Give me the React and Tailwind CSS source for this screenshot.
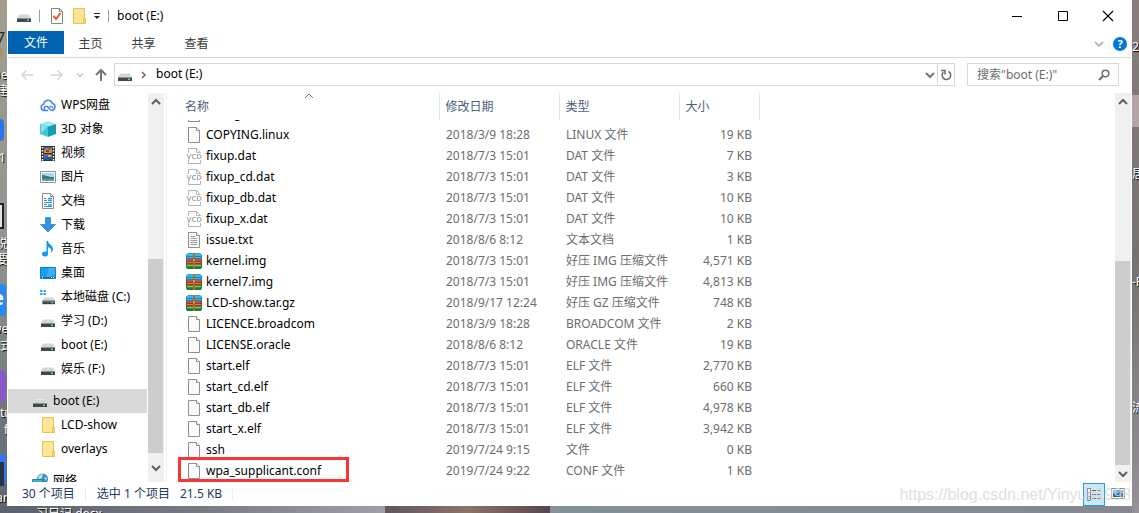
import React from "react";

const Svg = ({ children, className = "", w = 16, h = 16 }) => (
  <svg width={w} height={h} viewBox={`0 0 ${w} ${h}`} className={`shrink-0 ${className}`} aria-hidden="true">
    {children}
  </svg>
);

const DriveShape = () => (
  <>
    <path d="M3.500 5h9l2.500 4h-14z" fill="#d3d6d8" />
    <path d="M3.500 5h9l.6 1h-10.200z" fill="#e6e8e9" />
    <rect x="1" y="9" width="14" height="4" fill="#42474b" />
    <rect x="1" y="9" width="14" height="1" fill="#8b9195" />
    <rect x="11" y="10.500" width="2" height="1.500" fill="#4ee36a" />
  </>
);
const Drive = () => <Svg><g transform="translate(0 1)"><DriveShape /></g></Svg>;
const SystemDrive = () => (
  <Svg>
    <g transform="translate(1.500 3.500) scale(.9)"><DriveShape /></g>
    <path d="M0 1h2.500v2H0zM3.500 1H6v2H3.500zM0 4h2.500v2H0zM3.500 4H6v2H3.500z" fill="#1fb2ee" />
  </Svg>
);
const Folder = () => (
  <Svg>
    <path d="M2.500.500h11v10h1v5h-12z" fill="#ffe596" stroke="#e6c457" />
    <path d="M12.500 10.500v5h2v-5z" fill="#f8d775" stroke="#e6c457" />
  </Svg>
);
const Cloud = () => (
  <Svg>
    <path d="M8 13.500H4a3.200 3.200 0 0 1-.3-6.300A4.400 4.400 0 0 1 12.200 6.200a3.800 3.800 0 0 1 .1 7.300c-1.300 0-2-.6-2.800-1.500L8 10.200a2 2 0 0 0-3.300 2.300" fill="none" stroke="#4b86ea" strokeWidth="1.600" />
    <path d="M9.500 10.500c1-1.600 3.300-1 3.300.7" fill="none" stroke="#4b86ea" strokeWidth="1.400" />
  </Svg>
);
const Cube = () => (
  <Svg>
    <path d="M0 3 8 0l8 3-8 2.500z" fill="#9be8ec" />
    <path d="M0 3l8 2.500V16l-8-3z" fill="#45c8d5" />
    <path d="M16 3 8 5.500V16l8-3z" fill="#159bb2" />
    <path d="M1 4l6 2-6 6z" fill="#87e1e8" />
  </Svg>
);
const Film = () => (
  <Svg>
    <rect x="1" y="1" width="14" height="15" fill="#333" />
    <path d="M2.500 2v14M13.500 2v14" stroke="#fff" strokeDasharray="1.500 1.500" strokeWidth="1.500" />
    <rect x="4" y="2" width="8" height="6" fill="#3b64bd" />
    <rect x="4" y="9" width="8" height="6" fill="#3977c6" />
    <path d="M4 5l3-2 2 2 3-2v5H4z" fill="#dd8a28" /><path d="M4 13l4-2 4 2v2H4z" fill="#38527d" />
    <path d="M6 5h3v2H6z" fill="#a7312b" /><path d="M8 10h3v2H8z" fill="#e0b735" />
  </Svg>
);
const Picture = () => (
  <Svg>
    <path d="M.500 2.500h15v11H.500z" fill="#fff" stroke="#8d9499" />
    <path d="M2 4h12v4H2z" fill="#a8d6f4" /><path d="M2 6c4 0 5 2 12 2v2H2z" fill="#47796b" /><path d="M2 10h12v2H2z" fill="#5a9bd3" />
  </Svg>
);
const Document = () => (
  <Svg>
    <path d="M2.500.500h8l3 3v12h-11z" fill="#fff" stroke="#8b8b8b" /><path d="M10.500.500v3h3" fill="none" stroke="#8b8b8b" />
    <path d="M4 5.500h2M4 7.500h3M4 9.500h8M4 11.500h3M4 13.500h8" stroke="#3b8fcd" />
    <path d="M8 5.500h4M8 7.500h4M8 12h4" stroke="#2b9ce0" strokeWidth="1.500" />
  </Svg>
);
const Download = () => (
  <Svg><path d="M5.500.500h5v7h5L8 15 .500 7.500h5z" fill="#3593e3" stroke="#2479c9" strokeWidth=".7" /></Svg>
);
const Music = () => (
  <Svg>
    <ellipse cx="5" cy="13" rx="3" ry="2.500" fill="#1399f4" />
    <path d="M6.500 13V0H8c.3 3.500 5 4 5 7.700 0 2-1 3.300-2 4.300 1-3.500-.2-5-3-5.700V13z" fill="#1399f4" />
  </Svg>
);
const Desktop = () => (
  <Svg>
    <path d="M.500 2.500h15v11H.500z" fill="#19a0f4" stroke="#167dc3" /><path d="M9 3h6v6L6 13z" fill="#3bb0fa" />
    <path d="M1 12.500h14" stroke="#0b65a2" /><path d="M2 12.500h1m8 0h1m1 0h1" stroke="#fff" />
  </Svg>
);
const Network = () => (
  <Svg>
    <circle cx="10.500" cy="6" r="5.500" fill="#3c8fc0" />
    <path d="M6 4c2-3 5-3 5-3l-1 4-3 2zM12 4l3 1-1 3z" fill="#b9e2ee" />
    <path d="M.500 6.500h10v6H.500z" fill="#35b0df" stroke="#3e7894" /><path d="M3 14.500h6" stroke="#6c7a82" />
  </Svg>
);
const Blank = () => (
  <Svg>
    <path d="M2.500.500h8l3 3v12h-11z" fill="#fbfbfb" stroke="#8f8f8f" /><path d="M10.500.500v3h3" fill="#fff" stroke="#8f8f8f" />
  </Svg>
);
const TextFile = () => (
  <Svg>
    <path d="M2.500.500h8l3 3v12h-11z" fill="#fbfbfb" stroke="#8f8f8f" /><path d="M10.500.500v3h3" fill="#fff" stroke="#8f8f8f" />
    <path d="M4.500 4.500h5M4.500 6.500h7M4.500 8.500h7M4.500 10.500h7M4.500 12.500h7" stroke="#9c9c9c" />
  </Svg>
);
const Vcd = () => (
  <Svg>
    <path d="M2.500 5V.500h8l4 4V5M10.500.500v4h4M2.500 12v3.500h12V12" fill="none" stroke="#b4b4b4" />
    <path d="M1 6l2 5 2-5M10 6.500H7.500L6.500 7.500v2l1 1H10M11.500 6.500h2l1.500 1v2l-1.500 1h-2z" fill="none" stroke="#b0b0b0" strokeWidth="1.200" />
  </Svg>
);
const Archive = () => (
  <Svg>
    <path d="M2 0h12l2 2v4H0V2z" fill="#1487c4" /><path d="M2 .500h12l1.500 2.500H.500z" fill="#3cb9ec" /><path d="M1 4.500h14" stroke="#45b4e2" />
    <path d="M0 6h16v5H0z" fill="#a83420" /><path d="M1 7h14M1 9.500h14" stroke="#e2745a" />
    <path d="M0 11h16v3l-1 2H1l-1-2z" fill="#26762f" /><path d="M1 12.500h14" stroke="#78d256" strokeWidth="1.500" />
    <path d="M7 0h2v16H7z" fill="#a9702f" /><path d="M7 5.500h2v3.500H7z" fill="#f3cc69" stroke="#734517" strokeWidth=".6" />
  </Svg>
);
const Chevron = ({ d, color = "#5f5f5f", width = 2 }) => (
  <Svg w={10} h={10}><path d={d} fill="none" stroke={color} strokeWidth={width} /></Svg>
);
const DOWN = "M1 3l4 4 4-4";
const UP = "M1 7l4-4 4 4";
const RIGHT = "M3 2l3 3-3 3";

const treeItems = [
  ["WPS网盘", Cloud], ["3D 对象", Cube], ["视频", Film], ["图片", Picture], ["文档", Document], ["下载", Download],
  ["音乐", Music], ["桌面", Desktop], ["本地磁盘 (C:)", SystemDrive], ["学习 (D:)", Drive], ["boot (E:)", Drive], ["娱乐 (F:)", Drive],
];

const files = [
  ["COPYING.linux", "2018/3/9 18:28", "LINUX 文件", "19 KB", Blank],
  ["fixup.dat", "2018/7/3 15:01", "DAT 文件", "7 KB", Vcd],
  ["fixup_cd.dat", "2018/7/3 15:01", "DAT 文件", "3 KB", Vcd],
  ["fixup_db.dat", "2018/7/3 15:01", "DAT 文件", "10 KB", Vcd],
  ["fixup_x.dat", "2018/7/3 15:01", "DAT 文件", "10 KB", Vcd],
  ["issue.txt", "2018/8/6 8:12", "文本文档", "1 KB", TextFile],
  ["kernel.img", "2018/7/3 15:01", "好压 IMG 压缩文件", "4,571 KB", Archive],
  ["kernel7.img", "2018/7/3 15:01", "好压 IMG 压缩文件", "4,813 KB", Archive],
  ["LCD-show.tar.gz", "2018/9/17 12:24", "好压 GZ 压缩文件", "748 KB", Archive],
  ["LICENCE.broadcom", "2018/3/9 18:28", "BROADCOM 文件", "2 KB", Blank],
  ["LICENSE.oracle", "2018/8/6 8:12", "ORACLE 文件", "19 KB", Blank],
  ["start.elf", "2018/7/3 15:01", "ELF 文件", "2,770 KB", Blank],
  ["start_cd.elf", "2018/7/3 15:01", "ELF 文件", "660 KB", Blank],
  ["start_db.elf", "2018/7/3 15:01", "ELF 文件", "4,978 KB", Blank],
  ["start_x.elf", "2018/7/3 15:01", "ELF 文件", "3,942 KB", Blank],
  ["ssh", "2019/7/24 9:15", "文件", "0 KB", Blank],
  ["wpa_supplicant.conf", "2019/7/24 9:22", "CONF 文件", "1 KB", Blank],
];

function TreeItem({ icon: Icon, label, root, selected }) {
  return (
    <a href="#" className={`mr-px flex h-6 items-center gap-[5px] whitespace-nowrap ${root ? "pl-6" : "pl-8"} ${selected ? "bg-[#d9d9d9]" : ""}`}>
      <Icon />
      {label}
    </a>
  );
}

function Scrollbar({ before, thumb }) {
  return (
    <div className="flex w-4 shrink-0 flex-col items-center bg-[#f0f0f0]">
      <button aria-label="向上滚动" className="grid h-[18px] w-[15px] place-items-center"><Chevron d={UP} /></button>
      <div className={`flex-none ${before}`} />
      <div className={`mr-px w-[15px] bg-[#cdcdcd] ${thumb}`} />
      <button aria-label="向下滚动" className="grid min-h-[17px] w-[15px] flex-1 place-items-center"><Chevron d={DOWN} /></button>
    </div>
  );
}

function Wallpaper() {
  const label = "absolute text-xs leading-4 text-white [text-shadow:1px_1px_1px_#000]";
  return (
    <div aria-hidden="true" className="absolute inset-0 overflow-hidden bg-[#858b8e]">
      <div className="absolute inset-y-0 left-0 w-2 bg-linear-to-b from-[#a29e90] via-[#8d958f] to-[#5f666f]" />
      <div className="absolute inset-y-0 right-0 w-2 bg-linear-to-b from-[#887f7d] via-[#77716f] to-[#969199]" />
      <div className="absolute right-0 top-[95px] h-8 w-2 bg-[#b3a6a4]" />
      <div className="absolute bottom-0 left-0 h-[7px] w-[385px] bg-linear-to-r from-[#5b626d] via-[#777981] to-[#a09fa6]" />
      <div className="absolute bottom-0 left-[385px] h-[7px] w-[165px] bg-linear-to-r from-[#605560] via-[#8a7468] to-[#56474e]" />
      <div className="absolute bottom-0 left-[550px] h-[7px] w-[582px] bg-linear-to-r from-[#82919a] to-[#858890]" />
      <span className="absolute -left-1 top-[30px] text-base leading-4 text-[#292929]">7</span>
      <span className="absolute -left-1 top-[46px] text-xs leading-4 text-[#b38a43]">8</span>
      <span className={`${label} -left-2 top-[67px]`}>De</span>
      <span className={`${label} -left-1 top-[83px]`}>建</span>
      <div className="absolute -left-3 top-[119px] h-[22px] w-4 rounded bg-[#2c74ed]" />
      <span className={`${label} -left-2 top-[150px]`}>01</span>
      <div className="absolute -left-3 top-[203px] h-[26px] w-4 border-2 border-[#222] bg-[#dfe3ea]" />
      <span className={`${label} -left-1 top-[236px]`}>说</span>
      <span className={`${label} -left-1 top-[252px]`}>要</span>
      <div className="absolute -left-3 top-[284px] h-8 w-[18px] rounded bg-[#288af0]" />
      <span className="absolute -left-2 top-[290px] text-xl font-bold leading-4 text-white">e</span>
      <span className={`${label} -left-2 top-[321px]`}>we</span>
      <span className={`${label} left-0 top-[338px]`}>式</span>
      <div className="absolute -left-2 top-[370px] h-8 w-[14px] rounded bg-[#8859c7]" />
      <span className={`${label} left-0 top-[405px]`}>tu</span>
      <span className={`${label} left-1 top-[422px]`}>f</span>
      <div className="absolute -left-2 top-[454px] h-8 w-[14px] rounded bg-[#3477f2]" />
      <div className="absolute -left-2 top-[462px] h-6 w-3 bg-[#293344]" />
      <span className={`${label} -left-1 top-[490px]`}>ar</span>
      <span className={`${label} left-9 top-[506px]`}>习日记.docx</span>
      <span className={`${label} left-[1132px] top-[39px]`}>20</span>
      <span className={`${label} left-[1132px] top-[166px]`}>居</span>
      <span className={`${label} left-[1132px] top-[274px] whitespace-nowrap`}>-P</span>
      <span className={`${label} left-[1132px] top-[400px]`}>流</span>
    </div>
  );
}

function TitleBar() {
  return (
    <header className="flex h-[31px] items-center pl-2">
      <Drive />
      <span className="ml-[7px] h-3 w-px bg-[#999]" />
      <button aria-label="属性" className="ml-[9px]">
        <Svg>
          <path d="M2.500.500h8l3 3v12h-11z" fill="#fff" stroke="#858585" /><path d="M10.500.500v3h3" fill="none" stroke="#858585" />
          <path d="M4.500 8l2.500 3 4.500-6" fill="none" stroke="#e45b2b" strokeWidth="2" />
        </Svg>
      </button>
      <button aria-label="新建文件夹" className="ml-[6px]"><Folder /></button>
      <button aria-label="自定义快速访问工具栏" className="ml-[6px]">
        <Svg w={8} h={8}><path d="M1 1.500h6" stroke="#222" /><path d="M1 4h6L4 7z" fill="#222" /></Svg>
      </button>
      <span className="ml-[7px] h-3 w-px bg-[#999]" />
      <h1 className="ml-2 flex-1">boot (E:)</h1>
      <button aria-label="最小化" className="grid h-[31px] w-[46px] place-items-center"><Svg w={12} h={12}><path d="M1 6.500h10" stroke="#000" /></Svg></button>
      <button aria-label="最大化" className="grid h-[31px] w-[45px] place-items-center"><Svg w={12} h={12}><path d="M1.500 1.500h9v9h-9z" fill="none" stroke="#000" /></Svg></button>
      <button aria-label="关闭" className="grid h-[31px] w-[46px] place-items-center"><Svg w={12} h={12}><path d="M1 1l10 10M11 1L1 11" stroke="#000" strokeWidth="1.200" /></Svg></button>
    </header>
  );
}

function Ribbon() {
  return (
    <nav className="flex h-[27px] items-start border-b border-[#dadada] text-[#3b3b3b]">
      <button className="h-[23px] w-14 bg-[#0063b1] text-white">文件</button>
      {["主页", "共享", "查看"].map((tab) => <button key={tab} className="h-[25px] w-[53px]">{tab}</button>)}
      <span className="flex-1" />
      <button aria-label="展开功能区" className="grid h-[26px] w-5 place-items-center"><Chevron d={DOWN} color="#a6a6a6" width={1.500} /></button>
      <button aria-label="帮助" className="ml-1 mr-1 mt-[6px] grid size-[14px] place-items-center rounded-full bg-[#0078d7] text-[11px] font-bold leading-3 text-white">?</button>
    </nav>
  );
}

function AddressBar() {
  return (
    <div className="flex items-center pb-[7px] pl-3 pr-3 pt-[5px]">
      <button aria-label="后退"><Svg><path d="M13 8H2M6.500 3.500L2 8l4.500 4.500" fill="none" stroke="#d5d5d5" strokeWidth="1.500" /></Svg></button>
      <button aria-label="前进" className="ml-[13px]"><Svg><path d="M2 8h11M8.500 3.500L13 8l-4.500 4.500" fill="none" stroke="#d5d5d5" strokeWidth="1.500" /></Svg></button>
      <button aria-label="最近浏览的位置" className="ml-[11px]"><Svg w={8} h={8}><path d="M1 2.500l3 3 3-3" fill="none" stroke="#c9c9c9" strokeWidth="1.500" /></Svg></button>
      <button aria-label="上移" className="ml-[9px]"><Svg><path d="M8 14V3M3 8l5-5 5 5" fill="none" stroke="#747474" strokeWidth="2" /></Svg></button>
      <div className="ml-[5px] flex h-[23px] flex-1 items-center border border-[#d9d9d9]">
        <span className="ml-[2px]"><Drive /></span>
        <span className="ml-[6px]"><Chevron d={RIGHT} color="#6a6a6a" width={1.500} /></span>
        <a href="#" className="ml-[7px] flex-1 pb-px">boot (E:)</a>
        <button aria-label="以前的位置" className="grid h-[21px] w-[15px] place-items-center"><Chevron d={DOWN} color="#777" /></button>
        <button aria-label="刷新" className="grid h-[21px] w-[17px] place-items-center border-l border-[#d9d9d9]">
          <Svg w={12} h={12}><path d="M8.500 2.500A4.300 4.300 0 1 1 3.300 3.300M1 1.500h4V5.500" fill="none" stroke="#666" strokeWidth="1.500" /></Svg>
        </button>
      </div>
      <label className="ml-3 flex h-[23px] w-[152px] items-center border border-[#d9d9d9] pr-2">
        <input aria-label="搜索" placeholder={'搜索"boot (E:)"'} className="min-w-0 flex-1 pl-[9px] outline-none placeholder:text-[#6d6d6d]" />
        <Svg w={12} h={12}><circle cx="7.500" cy="4.500" r="3.300" fill="none" stroke="#6d6d6d" strokeWidth="1.500" /><path d="M5 7L1 11" stroke="#6d6d6d" strokeWidth="2" /></Svg>
      </label>
    </div>
  );
}

function FileTable() {
  const th = "h-[27px] border-r border-[#e5e5e5] text-left font-normal";
  return (
    <table className="w-[580px] table-fixed whitespace-nowrap text-[#6d6d6d]">
      <colgroup><col className="w-[260px]" /><col className="w-[120px]" /><col className="w-[120px]" /><col className="w-[80px]" /></colgroup>
      <thead className="text-[#4c607a]">
        <tr>
          <th className={`${th} relative pl-[6px]`}>
            名称
            <span className="absolute left-1/2 top-0 -translate-x-1/2"><Svg w={10} h={6}><path d="M1 5l4-4 4 4" fill="none" stroke="#777" /></Svg></span>
          </th>
          <th className={`${th} pl-[6px]`}>修改日期</th><th className={`${th} pl-[6px]`}>类型</th><th className={`${th} pl-[6px]`}>大小</th>
        </tr>
      </thead>
      <tbody>
        <tr>
          <td colSpan="4" className="p-0">
            <div className="flex h-1 items-end overflow-hidden pl-[7px]">
              <span className="flex h-[21px] shrink-0 items-center gap-1 text-black"><Blank />config.txt</span>
            </div>
          </td>
        </tr>
        {files.map(([name, date, type, size, Icon]) => (
          <tr key={name}>
            <td className="relative h-[21px] p-0 pl-[7px]">
              <span className="flex items-center gap-1 text-black"><Icon />{name}</span>
              {name === "wpa_supplicant.conf" && <span className="absolute -bottom-px -left-px h-[25px] w-[171px] border-3 border-[#fa3434]" />}
            </td>
            <td className="p-0 pl-[7px]">{date}</td>
            <td className="p-0 pl-[7px]">{type}</td>
            <td className="p-0 pr-[7px] text-right">{size}</td>
          </tr>
        ))}
      </tbody>
    </table>
  );
}

function StatusBar() {
  return (
    <footer className="relative flex h-6 items-center pl-[14px] pr-1 text-[#1e395b]">
      <span>30 个项目</span>
      <span className="ml-[10px] h-3 w-px bg-[#e8e8e8]" />
      <span className="ml-[11px]">选中 1 个项目</span>
      <span className="ml-[10px]">21.5 KB</span>
      <span className="ml-[10px] h-3 w-px bg-[#eee]" />
      <span className="flex-1" />
      <button aria-label="详细信息" className="mr-[3px] grid h-[23px] w-[22px] place-items-center border border-[#26a0da] bg-[#cce8f6]">
        <Svg>
          <path d="M1.500 2.500h3v12h-3zM1.500 6.500h3M1.500 10.500h3" fill="#fff" stroke="#858585" />
          <path d="M6 4.500h4m1 0h4M6 8.500h4m1 0h4M6 12.500h4m1 0h4" stroke="#686868" /><path d="M2.500 12h1v1h-1z" fill="#c33" />
        </Svg>
      </button>
      <button aria-label="大缩略图" className="grid h-[23px] w-[19px] place-items-center">
        <Svg><path d="M1.500 2.500h13v10h-13z" fill="#fff" stroke="#888" /><path d="M3 4h10v4H3z" fill="#70b4ea" /><path d="M3 7l4 1 3-2 3 2v3H3z" fill="#356890" /></Svg>
      </button>
      <span className="pointer-events-none absolute right-0 top-[3px] font-['Liberation_Sans'] text-base leading-5 text-[#d6d6d6]/80">https://blog.csdn.net/Yinyun1998</span>
    </footer>
  );
}

export default function App() {
  return (
    <div className="relative min-h-screen overflow-hidden pb-[7px] pl-[7px] pr-[7px] font-['Noto_Sans','Noto_Sans_CJK_SC',sans-serif] text-xs leading-4 text-black">
      <Wallpaper />
      <div className="relative bg-white pl-px pr-px">
        <TitleBar />
        <Ribbon />
        <AddressBar />
        <main className="flex">
          <aside className="flex w-[156px] shrink-0">
            <nav className="min-w-0 flex-1">
              {treeItems.map(([label, icon]) => <TreeItem key={label} label={label} icon={icon} />)}
              <div className="pt-2">
                <TreeItem label="boot (E:)" icon={Drive} root selected />
                <TreeItem label="LCD-show" icon={Folder} />
                <TreeItem label="overlays" icon={Folder} />
              </div>
              <div className="mt-2 h-[13px] overflow-hidden"><TreeItem label="网络" icon={Network} root /></div>
            </nav>
            <Scrollbar before="h-[148px]" thumb="h-[194px]" />
          </aside>
          <section className="ml-[2px] min-w-0 flex-1 border-l border-[#f0f0f0] pb-px pl-3"><FileTable /></section>
          <Scrollbar before="h-[150px]" thumb="h-[204px]" />
        </main>
        <StatusBar />
      </div>
    </div>
  );
}
